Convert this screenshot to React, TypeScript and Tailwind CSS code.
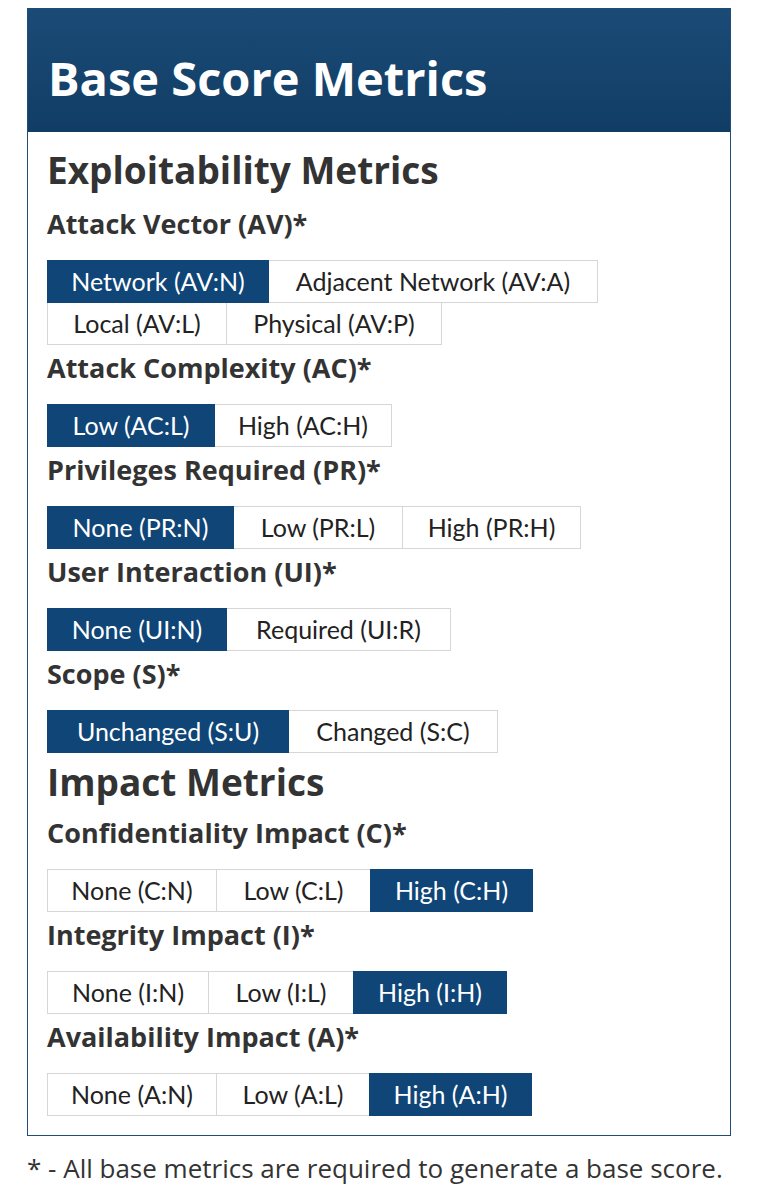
import React from "react";

type Option = { label: string; w: string; selected?: boolean };
type Metric = { title: string; rows: Option[][] };

const exploitability: Metric[] = [
  {
    title: "Attack Vector (AV)*",
    rows: [
      [
        { label: "Network (AV:N)", w: "w-[222px]", selected: true },
        { label: "Adjacent Network (AV:A)", w: "w-[330px]" },
      ],
      [
        { label: "Local (AV:L)", w: "w-[180px]" },
        { label: "Physical (AV:P)", w: "w-[216px]" },
      ],
    ],
  },
  {
    title: "Attack Complexity (AC)*",
    rows: [
      [
        { label: "Low (AC:L)", w: "w-[168px]", selected: true },
        { label: "High (AC:H)", w: "w-[178px]" },
      ],
    ],
  },
  {
    title: "Privileges Required (PR)*",
    rows: [
      [
        { label: "None (PR:N)", w: "w-[187px]", selected: true },
        { label: "Low (PR:L)", w: "w-[170px]" },
        { label: "High (PR:H)", w: "w-[179px]" },
      ],
    ],
  },
  {
    title: "User Interaction (UI)*",
    rows: [
      [
        { label: "None (UI:N)", w: "w-[180px]", selected: true },
        { label: "Required (UI:R)", w: "w-[225px]" },
      ],
    ],
  },
  {
    title: "Scope (S)*",
    rows: [
      [
        { label: "Unchanged (S:U)", w: "w-[242px]", selected: true },
        { label: "Changed (S:C)", w: "w-[210px]" },
      ],
    ],
  },
];

const impact: Metric[] = [
  {
    title: "Confidentiality Impact (C)*",
    rows: [
      [
        { label: "None (C:N)", w: "w-[170px]" },
        { label: "Low (C:L)", w: "w-[155px]" },
        { label: "High (C:H)", w: "w-[163px]", selected: true },
      ],
    ],
  },
  {
    title: "Integrity Impact (I)*",
    rows: [
      [
        { label: "None (I:N)", w: "w-[162px]" },
        { label: "Low (I:L)", w: "w-[146px]" },
        { label: "High (I:H)", w: "w-[154px]", selected: true },
      ],
    ],
  },
  {
    title: "Availability Impact (A)*",
    rows: [
      [
        { label: "None (A:N)", w: "w-[170px]" },
        { label: "Low (A:L)", w: "w-[154px]" },
        { label: "High (A:H)", w: "w-[163px]", selected: true },
      ],
    ],
  },
];

const MetricGroup: React.FC<{ metric: Metric }> = ({ metric }) => (
  <div className="flex flex-col">
    <h4 className="font-['Open_Sans',sans-serif] text-[27px] leading-[32px] font-bold text-[#333]">
      {metric.title}
    </h4>
    <div className="mt-[20px] mb-[7px] flex flex-col">
      {metric.rows.map((row, i) => (
        <div key={i} className={`flex ${i > 0 ? "-mt-px" : ""}`}>
          {row.map((opt, j) => (
            <div
              key={opt.label}
              className={`${opt.w} h-[43px] flex items-center justify-center border text-[25px] ${
                j > 0 ? "-ml-px" : ""
              } ${
                opt.selected
                  ? "bg-[#0f4577] border-[#0f4577] text-white relative"
                  : "bg-white border-[#d6d6d6] text-[#222]"
              }`}
            >
              {opt.label}
            </div>
          ))}
        </div>
      ))}
    </div>
  </div>
);

const App: React.FC = () => {
  return (
    <div className="min-h-[1200px] bg-white px-[27px] pt-[8px] font-['Lato',sans-serif]">
      <div className="border border-[#1e4d78]">
        <div className="h-[123px] bg-gradient-to-b from-[#1a4b76] to-[#113d65] px-[20px] pt-[39px]">
          <h2 className="font-['Open_Sans',sans-serif] text-[47px] leading-[60px] font-bold text-white">
            Base Score Metrics
          </h2>
        </div>
        <div className="px-[19px] pt-[16px] pb-[12px]">
          <h3 className="font-['Open_Sans',sans-serif] text-[37px] leading-[44px] font-bold text-[#333] mb-[16px]">
            Exploitability Metrics
          </h3>
          {exploitability.map((m) => (
            <MetricGroup key={m.title} metric={m} />
          ))}
          <h3 className="font-['Open_Sans',sans-serif] text-[37px] leading-[44px] font-bold text-[#333] mb-[13px]">
            Impact Metrics
          </h3>
          {impact.map((m) => (
            <MetricGroup key={m.title} metric={m} />
          ))}
        </div>
      </div>
      <p className="mt-[15px] font-['Open_Sans',sans-serif] text-[26px] leading-[34px] text-[#333]">
        * - All base metrics are required to generate a base score.
      </p>
    </div>
  );
};

export default App;
